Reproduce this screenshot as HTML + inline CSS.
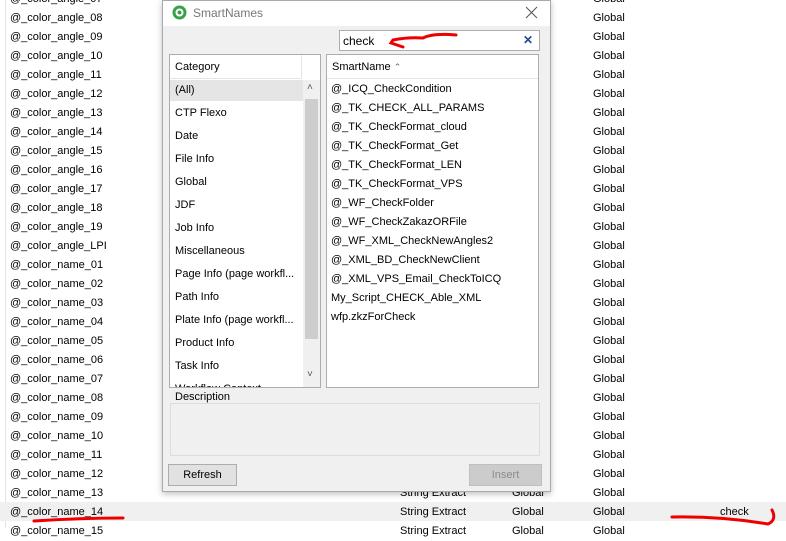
<!DOCTYPE html>
<html><head><style>
*{margin:0;padding:0;box-sizing:border-box}
body{width:786px;height:528px;overflow:hidden;background:#fff;font-family:"Liberation Sans",sans-serif;font-size:11px;color:#000;position:relative}
.a{position:absolute;white-space:nowrap}
.row{position:absolute;left:0;width:786px;height:19px;line-height:19px}
.row span{position:absolute}
.dlg{position:absolute;left:162px;top:0;width:389px;height:492px;background:#f0f0f0;border:1px solid #aaa;box-shadow:0 2px 6px rgba(0,0,0,.25)}
.title{position:absolute;left:0;top:0;width:387px;height:25px;background:#fff}
.box{position:absolute;background:#fff;border:1px solid #adadad}
.it{position:absolute;left:5px;height:19px;line-height:19px}
</style></head><body>
<div class="a" style="left:5px;top:0;width:1px;height:528px;background:#e3e3e3"></div>
<div class="row" style="top:502px;background:#f0f0f0"></div>
<div id="rows"></div>
<script>
var n=[];for(var i=7;i<=19;i++)n.push('@_color_angle_'+(i<10?'0':'')+i);n.push('@_color_angle_LPI');for(var i=1;i<=15;i++)n.push('@_color_name_'+(i<10?'0':'')+i);
var h='';n.forEach(function(s,k){var t=-10.5+19*k;h+='<div class="row" style="top:'+t+'px"><span style="left:10px">'+s+'</span><span style="left:400px">String Extract</span><span style="left:512px">Global</span><span style="left:593px">Global</span>'+(s=='@_color_name_14'?'<span style="left:720px">check</span>':'')+'</div>';});
document.getElementById('rows').innerHTML=h;
</script>
<svg class="a" style="left:0;top:500px" width="786" height="28"><path d="M34 21 Q80 18 123 18" stroke="#e00" stroke-width="3" fill="none" stroke-linecap="round"/><path d="M672 17 Q720 16 768 24 Q777 20 772 10" stroke="#e00" stroke-width="3" fill="none" stroke-linecap="round"/></svg>
<div class="dlg">
<div class="title"></div>
<svg class="a" style="left:9px;top:4px" width="15" height="15"><circle cx="7.5" cy="7.5" r="7" fill="#3aa14a"/><circle cx="7.5" cy="7.5" r="3" fill="none" stroke="#fff" stroke-width="2"/></svg>
<div class="a" style="left:30px;top:5px;font-size:12px;color:#777">SmartNames</div>
<svg class="a" style="left:362px;top:5px" width="13" height="13"><path d="M1 1L12 12M12 1L1 12" stroke="#555" stroke-width="1"/></svg>
<div class="box" style="left:176px;top:29px;width:201px;height:21px"><div class="a" style="left:3px;top:3px;font-size:12px">check</div><div class="a" style="left:183px;top:2px;color:#1c4f8c;font-weight:bold;font-size:12px">✕</div></div>
<svg class="a" style="left:225px;top:28px" width="70" height="20"><path d="M68 6 Q45 4 35 9 Q20 8 5 11 L3 14 L15 18" stroke="#e00" stroke-width="3" fill="none" stroke-linecap="round"/></svg>
<div class="box" style="left:6px;top:53px;width:152px;height:334px;overflow:hidden">
<div class="a" style="left:0;top:0;width:132px;height:24px;border-bottom:1px solid #e5e5e5;border-right:1px solid #e5e5e5"></div>
<div class="it" style="top:3px;font-size:11px">Category</div>
<div class="a" style="left:0;top:25px;width:133px;height:21px;background:#e5e5e5"></div>
<div id="cat"></div>
<div class="a" style="left:133px;top:25px;width:17px;height:308px;background:#f0f0f0"></div>
<div class="a" style="left:135px;top:44px;width:13px;height:240px;background:#cdcdcd"></div>
<div class="a" style="left:137px;top:27px;color:#555;font-size:10px">˄</div>
<div class="a" style="left:137px;top:314px;color:#555;font-size:10px">˅</div>
</div>
<div class="box" style="left:163px;top:53px;width:213px;height:334px;overflow:hidden">
<div class="a" style="left:0;top:0;width:211px;height:24px;border-bottom:1px solid #e5e5e5"></div>
<div class="it" style="top:3px">SmartName <span style="color:#666;font-size:9px">⌃</span></div>
<div id="sn"></div>
</div>
<div class="a" style="left:7px;top:402px;width:370px;height:53px;border:1px solid #dcdcdc"></div>
<div class="a" style="left:10px;top:390px;background:#f0f0f0;padding:0 2px">Description</div>
<div class="a" style="left:5px;top:463px;width:69px;height:22px;border:1px solid #adadad;background:#e1e1e1;text-align:center;line-height:20px">Refresh</div>
<div class="a" style="left:306px;top:463px;width:73px;height:22px;border:1px solid #bfbfbf;background:#cccccc;color:#8a8a8a;text-align:center;line-height:20px">Insert</div>
</div>
<script>
var c=['(All)','CTP Flexo','Date','File Info','Global','JDF','Job Info','Miscellaneous','Page Info (page workfl...','Path Info','Plate Info (page workfl...','Product Info','Task Info','Workflow Context'];
var h='';c.forEach(function(s,k){h+='<div class="it" style="top:'+(26+23*k)+'px">'+s+'</div>';});document.getElementById('cat').innerHTML=h;
var s=['@_ICQ_CheckCondition','@_TK_CHECK_ALL_PARAMS','@_TK_CheckFormat_cloud','@_TK_CheckFormat_Get','@_TK_CheckFormat_LEN','@_TK_CheckFormat_VPS','@_WF_CheckFolder','@_WF_CheckZakazORFile','@_WF_XML_CheckNewAngles2','@_XML_BD_CheckNewClient','@_XML_VPS_Email_CheckToICQ','My_Script_CHECK_Able_XML','wfp.zkzForCheck'];
h='';s.forEach(function(t,k){h+='<div class="it" style="left:4px;top:'+(25+19*k)+'px">'+t+'</div>';});document.getElementById('sn').innerHTML=h;
</script>
</body></html>
